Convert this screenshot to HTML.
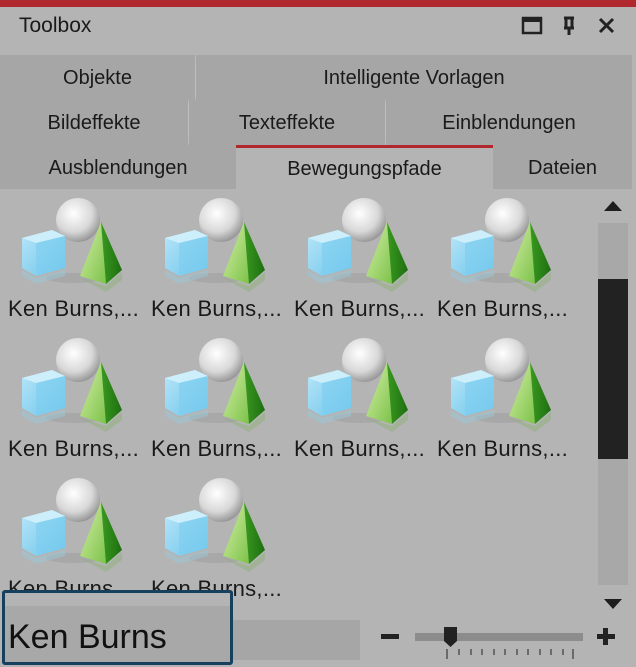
<!DOCTYPE html>
<html><head><meta charset="utf-8"><style>
*{margin:0;padding:0;box-sizing:border-box}
body{width:636px;height:667px;background:#b4b4b4;position:relative;overflow:hidden;font-family:"Liberation Sans",sans-serif;color:#1a1a1a}
.abs{position:absolute}
.tab{position:absolute;background:#a6a6a6;font-size:20px;text-align:center;line-height:47px;height:45px}
.sep{position:absolute;width:1px;background:#bdbdbd}
.item{position:absolute;width:143px}
.item svg{position:absolute;left:0;top:0}
.item .t{position:absolute;left:0;top:100px;font-size:22px;letter-spacing:0.3px;white-space:nowrap;color:#1a1a1a}
</style></head><body>
<div class="abs" style="left:0;top:0;width:636px;height:7px;background:#b0282d"></div>
<div class="abs" style="left:19px;top:14px;font-size:21px">Toolbox</div>
<svg class="abs" style="left:520px;top:15px" width="100" height="22">
<rect x="3" y="3" width="18" height="15" fill="none" stroke="#222" stroke-width="2.5"/><rect x="3" y="3" width="18" height="4" fill="#222"/>
<path d="M44 3h10M46 3v10M52 3v10M44 13h10M49 13v7" stroke="#222" stroke-width="3" fill="none"/>
<path d="M80 4l13 13M93 4l-13 13" stroke="#222" stroke-width="3"/>
</svg>
<div class="tab" style="left:0;top:55px;width:195px">Objekte</div>
<div class="tab" style="left:196px;top:55px;width:436px">Intelligente Vorlagen</div>
<div class="tab" style="left:0;top:100px;width:188px">Bildeffekte</div>
<div class="tab" style="left:189px;top:100px;width:196px">Texteffekte</div>
<div class="tab" style="left:386px;top:100px;width:246px">Einblendungen</div>
<div class="tab" style="left:0;top:145px;width:236px;height:44px">Ausblendungen</div>
<div class="tab" style="left:236px;top:145px;width:257px;height:44px;background:#b4b4b4;border-top:3px solid #b0282d;line-height:43px">Bewegungspfade</div>
<div class="tab" style="left:493px;top:145px;width:139px;height:44px">Dateien</div>
<div class="sep" style="left:195px;top:57px;height:41px"></div>
<div class="sep" style="left:188px;top:102px;height:41px"></div>
<div class="sep" style="left:385px;top:102px;height:41px"></div>
<svg width="0" height="0" style="position:absolute"><defs>
<radialGradient id="sp" cx="0.4" cy="0.35" r="0.7"><stop offset="0" stop-color="#fff"/><stop offset="0.6" stop-color="#d8d8d8"/><stop offset="1" stop-color="#8e8e8e"/></radialGradient>
<linearGradient id="cf" x1="0" y1="0" x2="1" y2="1"><stop offset="0" stop-color="#b8e6f8"/><stop offset="1" stop-color="#6cc4ea"/></linearGradient>
<linearGradient id="pl" x1="0" y1="0" x2="1" y2="1"><stop offset="0" stop-color="#d6f0a6"/><stop offset="1" stop-color="#7cc24a"/></linearGradient>
<linearGradient id="pr" x1="0" y1="0" x2="1" y2="0"><stop offset="0" stop-color="#3a9a20"/><stop offset="1" stop-color="#1d6e10"/></linearGradient>
<g id="ic">
<ellipse cx="66" cy="82" rx="28" ry="5" fill="#a0a0a0" opacity=".6"/>
<circle cx="70" cy="24" r="22" fill="url(#sp)"/>
<path d="M14 42 L44 34 L57 40 L57 72 L28 80 L14 72 Z" fill="url(#cf)"/>
<path d="M14 42 L44 34 L57 40 L28 47 Z" fill="#cdeffc"/>
<path d="M28 47 L57 40 L57 72 L28 80Z" fill="#7ccdf0" opacity=".6"/>
<path d="M14 74 L28 82 L57 74 L57 80 L28 88 L14 80Z" fill="#9cc8d8" opacity=".5"/>
<path d="M93 26 L72 80 L98 88 Z" fill="url(#pl)"/>
<path d="M93 26 L98 88 L114 74 Z" fill="url(#pr)"/>
<path d="M72 82 L98 90 L114 76 L114 84 L98 96 Z" fill="#8ab070" opacity=".45"/>
</g></defs></svg>
<div class="item" style="left:8px;top:196px"><svg width="130" height="100"><use href="#ic"/></svg><div class="t">Ken Burns,...</div></div>
<div class="item" style="left:151px;top:196px"><svg width="130" height="100"><use href="#ic"/></svg><div class="t">Ken Burns,...</div></div>
<div class="item" style="left:294px;top:196px"><svg width="130" height="100"><use href="#ic"/></svg><div class="t">Ken Burns,...</div></div>
<div class="item" style="left:437px;top:196px"><svg width="130" height="100"><use href="#ic"/></svg><div class="t">Ken Burns,...</div></div>
<div class="item" style="left:8px;top:336px"><svg width="130" height="100"><use href="#ic"/></svg><div class="t">Ken Burns,...</div></div>
<div class="item" style="left:151px;top:336px"><svg width="130" height="100"><use href="#ic"/></svg><div class="t">Ken Burns,...</div></div>
<div class="item" style="left:294px;top:336px"><svg width="130" height="100"><use href="#ic"/></svg><div class="t">Ken Burns,...</div></div>
<div class="item" style="left:437px;top:336px"><svg width="130" height="100"><use href="#ic"/></svg><div class="t">Ken Burns,...</div></div>
<div class="item" style="left:8px;top:476px"><svg width="130" height="100"><use href="#ic"/></svg><div class="t">Ken Burns,...</div></div>
<div class="item" style="left:151px;top:476px"><svg width="130" height="100"><use href="#ic"/></svg><div class="t">Ken Burns,...</div></div>
<svg class="abs" style="left:603px;top:199px" width="20" height="14"><path d="M1 12L10 2L19 12Z" fill="#1e1e1e"/></svg>
<div class="abs" style="left:598px;top:223px;width:30px;height:362px;background:#a8a8a8"></div>
<div class="abs" style="left:598px;top:279px;width:30px;height:180px;background:#222"></div>
<svg class="abs" style="left:603px;top:597px" width="20" height="14"><path d="M1 2L10 12L19 2Z" fill="#1e1e1e"/></svg>
<div class="abs" style="left:232px;top:620px;width:128px;height:40px;background:#a6a6a6"></div>
<div class="abs" style="left:2px;top:590px;width:231px;height:75px;border:3px solid #16405e;border-radius:3px;background:#a8a8a8;overflow:hidden">
<div style="height:13px;background:#b4b4b4"></div>
<div style="font-size:34px;padding-left:3px;line-height:62px;color:#111">Ken Burns</div></div>
<div class="abs" style="left:381px;top:634px;width:18px;height:5px;background:#222"></div>
<div class="abs" style="left:415px;top:633px;width:168px;height:8px;background:#8c8c8c"></div>
<svg class="abs" style="left:441px;top:625px" width="20" height="24"><path d="M3 2H16V16L9.5 22L3 16Z" fill="#222"/></svg>
<svg class="abs" style="left:420px;top:648px" width="170" height="12">
<path d="M27 1v10M39 1v6M51 1v6M62 1v6M74 1v6M85 1v6M97 1v6M108 1v6M120 1v6M131 1v6M143 1v6M153 1v10" stroke="#222" stroke-width="1"/></svg>
<div class="abs" style="left:597px;top:634px;width:18px;height:5px;background:#222"></div>
<div class="abs" style="left:603px;top:628px;width:5px;height:17px;background:#222"></div>
</body></html>
